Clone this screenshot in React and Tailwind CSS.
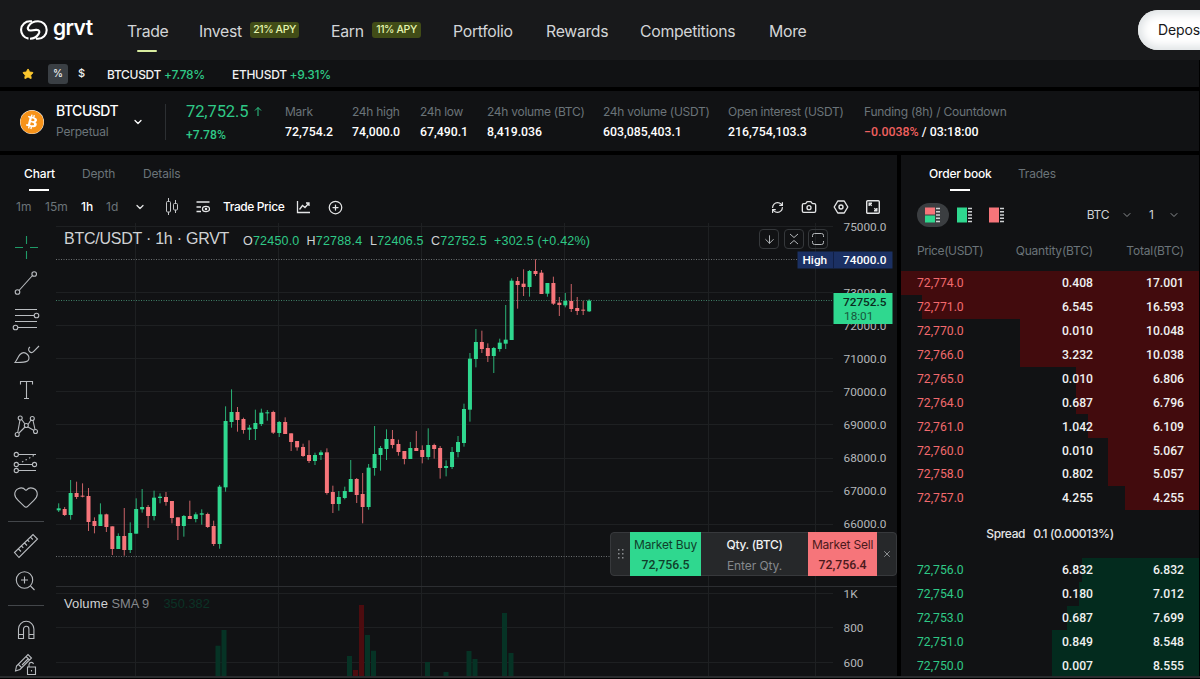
import { ArrowDown, Camera, ChevronDown, CirclePlus, Heart, RefreshCw, Star, X } from 'lucide-react';
import { FaBitcoin } from 'react-icons/fa';

const NAV = [
  { label: 'Trade', width: 'w-10', active: true },
  { label: 'Invest', width: 'w-[43px]', badge: '21% APY' },
  { label: 'Earn', width: 'w-[33px]', badge: '11% APY' },
  { label: 'Portfolio', width: 'w-[61px]' },
  { label: 'Rewards', width: 'w-[62px]' },
  { label: 'Competitions', width: 'w-[97px]' },
  { label: 'More', width: 'w-[37px]' },
];

const STATS = [
  { label: 'Mark', value: '72,754.2', width: 'w-[67px]' },
  { label: '24h high', value: '74,000.0', width: 'w-[68px]' },
  { label: '24h low', value: '67,490.1', width: 'w-[67px]' },
  { label: '24h volume (BTC)', value: '8,419.036', width: 'w-[116px]' },
  { label: '24h volume (USDT)', value: '603,085,403.1', width: 'w-[125px]' },
  { label: 'Open interest (USDT)', value: '216,754,103.3', width: 'w-[136px]' },
];

const ASKS = [
  ['72,774.0', '0.408', '17.001', 298],
  ['72,771.0', '6.545', '16.593', 277],
  ['72,770.0', '0.010', '10.048', 179],
  ['72,766.0', '3.232', '10.038', 179],
  ['72,765.0', '0.010', '6.806', 123],
  ['72,764.0', '0.687', '6.796', 123],
  ['72,761.0', '1.042', '6.109', 111],
  ['72,760.0', '0.010', '5.067', 91],
  ['72,758.0', '0.802', '5.057', 91],
  ['72,757.0', '4.255', '4.255', 74],
];

const BIDS = [
  ['72,756.0', '6.832', '6.832', 117],
  ['72,754.0', '0.180', '7.012', 120],
  ['72,753.0', '0.687', '7.699', 132],
  ['72,751.0', '0.849', '8.548', 147],
  ['72,750.0', '0.007', '8.555', 147],
];

const GREEN = '#2fd88f';
const RED = '#f6757a';

// up/down, high, body top, body bottom, low, in thirds of a pixel below `top`
const CANDLES = [
  {
    top: 157,
    bars: [
      [1, 370, 385, 391, 396], [0, 381, 387, 405, 408], [1, 300, 339, 405, 419], [0, 305, 339, 351, 357],
      [0, 310, 347, 350, 352], [0, 324, 348, 426, 453], [0, 412, 423, 438, 460], [1, 370, 403, 438, 438],
      [0, 401, 403, 441, 456], [0, 439, 439, 507, 525], [1, 460, 468, 507, 507], [0, 384, 468, 510, 527],
      [1, 427, 459, 510, 519], [1, 355, 387, 461, 461], [1, 327, 381, 388, 398], [0, 375, 381, 408, 444],
      [1, 332, 353, 408, 421], [1, 340, 350, 354, 370], [0, 336, 351, 366, 377], [0, 363, 363, 414, 430],
      [0, 412, 412, 438, 480], [1, 405, 408, 438, 470], [0, 362, 408, 417, 417], [1, 397, 403, 417, 427],
      [1, 388, 400, 404, 434], [0, 398, 402, 441, 444], [0, 422, 438, 492, 498], [1, 315, 320, 492, 506],
      [1, 79, 123, 322, 335], [1, 28, 96, 126, 143], [0, 81, 96, 120, 155], [0, 113, 117, 150, 161],
      [1, 135, 143, 149, 180], [1, 89, 129, 147, 180], [1, 86, 98, 132, 138], [1, 90, 97, 100, 122],
      [0, 92, 96, 158, 162], [1, 123, 126, 159, 171], [0, 112, 126, 162, 162], [0, 160, 160, 186, 213],
      [0, 183, 183, 202, 212], [0, 191, 201, 228, 231], [0, 181, 225, 243, 249], [1, 218, 225, 243, 255],
      [1, 211, 217, 225, 240], [0, 205, 217, 339, 344],
    ],
  },
  {
    top: 177,
    bars: [
      [0, 257, 276, 312, 339], [1, 273, 291, 312, 332], [1, 260, 273, 294, 298], [1, 180, 237, 276, 276],
      [0, 234, 237, 285, 309], [0, 219, 282, 321, 370], [1, 192, 203, 321, 329], [1, 78, 162, 204, 227],
      [1, 138, 144, 165, 212], [1, 88, 117, 147, 180], [0, 90, 117, 135, 145], [0, 119, 132, 156, 167],
      [0, 153, 153, 177, 193], [1, 126, 144, 177, 177], [0, 93, 144, 153, 153], [0, 136, 150, 171, 190],
      [1, 85, 135, 171, 179], [0, 131, 135, 147, 176], [0, 138, 144, 204, 236], [1, 181, 198, 204, 229],
      [1, 141, 156, 201, 207], [1, 108, 126, 156, 172],
    ],
  },
  {
    top: 27,
    bars: [
      [1, 461, 477, 579, 590], [1, 309, 326, 479, 515], [1, 237, 276, 327, 352], [0, 242, 276, 297, 309],
      [0, 280, 294, 318, 336], [1, 291, 294, 318, 369], [1, 266, 278, 297, 305], [1, 165, 269, 281, 297],
      [1, 85, 92, 270, 270], [0, 81, 93, 105, 176], [0, 58, 101, 111, 138], [1, 60, 63, 111, 140],
      [0, 28, 63, 72, 78], [0, 60, 68, 132, 132], [1, 99, 99, 131, 140], [0, 80, 99, 161, 165],
      [0, 141, 158, 165, 198], [1, 129, 153, 166, 172], [0, 102, 153, 177, 186], [0, 141, 174, 183, 195],
      [0, 152, 179, 182, 195], [1, 148, 152, 184, 186],
    ],
  },
].flatMap(({ top, bars }) => bars.map(([up, ...ys]) => [up, ...ys.map((y) => top + y / 3)]));

// x, top, is up
const VOLUMES = [
  [161, 422.7, 1], [167, 407, 1], [292.5, 433, 1], [298.5, 447, 0], [304.5, 382, 0], [310.5, 412, 1],
  [316.5, 427.7, 1], [370.5, 439, 1], [389, 449, 1], [412, 428, 1], [418, 436, 1], [447.5, 390, 1], [454, 430, 1],
];

const PRICE_LABELS = [
  ['75000.0', 3.5], ['73000.0', 70], ['72000.0', 102.5], ['71000.0', 135.5], ['70000.0', 168.5], ['69000.0', 202],
  ['68000.0', 235], ['67000.0', 268], ['66000.0', 301], ['1K', 370.5], ['800', 405], ['600', 440],
];

function Logo() {
  return (
    <div className="flex items-center gap-[5px] w-[107px] shrink-0 text-white">
      <svg width="28" height="20" viewBox="0 0 28 20" fill="none" stroke="currentColor" strokeWidth="2.1">
        <path d="M12 1.300H10a8.700 8.700 0 0 0-1.500 17.300" />
        <path d="M16 18.700h2a8.700 8.700 0 0 0 0-17.400c-4.500 0-7.500 2-9.300 4.600C7 8.500 8 10.800 11 10.500l5-.6c3.500-.3 4.200 1.700 2.500 4.200-1.600 2.600-4.500 4.600-8.500 4.600" />
      </svg>
      <span className="font-['Inter'] font-semibold text-[21px] leading-[24px] tracking-[-0.600px] -translate-y-[2px]">grvt</span>
    </div>
  );
}

function Header() {
  return (
    <header className="flex h-[60px] shrink-0 items-center bg-[#18191b] pl-5 overflow-hidden">
      <Logo />
      <nav className="flex shrink-0 items-center gap-8">
        {NAV.map((n) => (
          <div key={n.label} className="flex items-center gap-2 h-[60px]">
            <div className={`${n.width} relative whitespace-nowrap text-[15.800px] leading-6 tracking-[-0.300px] text-[#d3d5d7] pt-[3px]`}>
              {n.label}
              {n.active && <span className="absolute left-[10px] top-[33px] h-[2px] w-5 rounded bg-[#d9eda0]" />}
            </div>
            {n.badge && (
              <span className="flex h-4 w-[49px] items-center justify-center rounded-[3px] bg-[#414c17] text-[10.500px] font-medium tracking-[-0.400px] text-[#e6f5b0] whitespace-nowrap">
                {n.badge}
              </span>
            )}
          </div>
        ))}
      </nav>
      <button
        type="button"
        className="ml-[332px] h-10 w-[120px] shrink-0 rounded-full bg-white pl-5 text-left text-sm tracking-[-0.150px] text-[#17181a] shadow-[inset_0_0_8px_4px_#dfe3e5]"
      >
        Deposit
      </button>
    </header>
  );
}

function Favorites() {
  return (
    <div className="flex h-[27px] shrink-0 items-center bg-[#111214] pl-[22px] text-xs font-medium text-[#f0f1f1] mr-px">
      <Star size={12} className="fill-[#fbc72e] text-[#fbc72e]" />
      <span className="ml-[14px] flex size-5 items-center justify-center rounded-[3px] bg-[#3a3f44] text-[10px]">%</span>
      <span className="ml-[10px] w-[29px] text-[11px]">$</span>
      <span className="w-[125px] tracking-[-0.3px] pt-[2px]">BTCUSDT <span className="text-[#2fc987]">+7.78%</span></span>
      <span className="tracking-[-0.3px] pt-[2px]">ETHUSDT <span className="text-[#2fc987]">+9.31%</span></span>
    </div>
  );
}

function MarketInfo() {
  return (
    <section className="flex h-[60px] shrink-0 items-center bg-[#111214] pl-5 pt-px mr-px text-xs whitespace-nowrap">
      <FaBitcoin size={24} className="text-[#f7931a] bg-white rounded-full" />
      <div className="ml-3 w-[76px]">
        <div className="text-sm font-medium leading-5 tracking-[-0.500px] text-white">BTCUSDT</div>
        <div className="pt-px leading-5 text-[#6b7479] tracking-[-0.200px]">Perpetual</div>
      </div>
      <ChevronDown size={12} strokeWidth={2.500} className="text-white" />
      <div className="ml-[21px] h-9 w-px bg-[#2c2f32]" />
      <div className="ml-5 w-[99px] pt-1 text-[#2fc987]">
        <div className="flex items-center gap-[5px] font-['Roboto'] text-[16.500px] leading-[23px] tracking-[-0.100px]">
          72,752.5 <svg width="10" height="11" viewBox="0 0 10 11" fill="none" stroke="currentColor"><path d="M5 10V1.500M2 4.500l3-3 3 3" /></svg>
        </div>
        <div className="font-['Roboto'] text-[12.200px] font-medium leading-6">+7.78%</div>
      </div>
      {STATS.map((s) => (
        <div key={s.label} className={s.width}>
          <div className="leading-5 tracking-[-0.280px] text-[#6b7479]">{s.label}</div>
          <div className="font-['Roboto'] text-[12.300px] font-medium leading-5 text-white">{s.value}</div>
        </div>
      ))}
      <div>
        <div className="leading-5 tracking-[-0.250px] text-[#6b7479]">Funding (8h) / Countdown</div>
        <div className="font-['Roboto'] text-[12.400px] font-medium leading-5 text-white"><span className="text-[#f0605f]">−0.0038%</span> / 03:18:00</div>
      </div>
    </section>
  );
}

function Toolbar() {
  return (
    <div className="flex h-8 shrink-0 items-center pl-4 text-xs text-[#6b7479] whitespace-nowrap">
      <span className="w-[29px]">1m</span>
      <span className="w-9">15m</span>
      <span className="w-[25px] font-medium text-white">1h</span>
      <span className="w-7">1d</span>
      <ChevronDown size={12} strokeWidth={2.500} className="text-[#e4e5e6]" />
      <svg className="ml-[19px]" width="14" height="18" viewBox="0 0 14 18" fill="none" stroke="#c5c7c9">
        <path d="M3.500 0v3M3.500 14v3M10.500 2v3M10.500 12v3" />
        <rect x="1.500" y="3.500" width="4" height="10.500" rx="1" />
        <rect x="8.500" y="5.500" width="4" height="6.500" rx="1" />
      </svg>
      <svg className="ml-[17px]" width="14" height="12" viewBox="0 0 14 12" fill="none" stroke="#e4e5e6" strokeWidth="1.300">
        <path d="M.500 1H13.500M.500 6H5M.500 10.500H5" />
        <ellipse cx="10" cy="8" rx="3.500" ry="2.600" />
        <circle cx="10" cy="8" r=".6" />
      </svg>
      <span className="ml-[13px] w-[73px] font-medium tracking-[-0.400px] text-white">Trade Price</span>
      <svg width="14" height="14" viewBox="0 0 14 14" fill="none" stroke="#e4e5e6" strokeWidth="1.300">
        <path d="M1.500 1v11.500H14M3.500 9.500l3-4 2.500 2 3.800-4.300M10 3h3v3" />
      </svg>
      <CirclePlus size={15} strokeWidth={2} className="ml-[18px] text-[#e4e5e6]" />
      <div className="ml-auto mr-4 flex items-center gap-4 text-[#e4e5e6]">
        <RefreshCw size={13} strokeWidth={2.200} className="mr-px" />
        <Camera size={16} strokeWidth={2} />
        <svg width="16" height="16" viewBox="0 0 16 16" fill="none" stroke="currentColor" strokeWidth="1.400">
          <path d="M4.800 2h6.400L14.800 8l-3.600 6H4.800L1.200 8z" strokeLinejoin="round" />
          <circle cx="8" cy="8" r="2" />
        </svg>
        <svg width="16" height="16" viewBox="0 0 16 16" fill="none" stroke="currentColor" strokeWidth="1.400">
          <rect x="1.700" y="1.700" width="12.600" height="12.600" rx="1" />
          <path d="M4.200 7V4.200H7M4.200 4.200l2.500 2.500M9 11.800h2.800V9M11.800 11.800L9.300 9.300" />
        </svg>
      </div>
    </div>
  );
}

function DrawingTools() {
  return (
    <svg className="shrink-0" width="56" height="455" viewBox="0 0 56 455" fill="none" stroke="#b9bcc0" strokeWidth="1.100">
      {/* crosshair */}
      <path d="M15 24.500h8M30 24.500h8M26.500 13v8M26.500 28v8" stroke="#1f9a68" />
      {/* trend line */}
      <path d="M19 67.500L32.500 52.500" />
      <circle cx="17.500" cy="69" r="2.300" /><circle cx="34.200" cy="51" r="2.300" />
      {/* fib levels */}
      <path d="M15 86.500h22M15 92.500h19M15 98.500h22M18 104.500h19" />
      <circle cx="36.500" cy="92.500" r="2.300" /><circle cx="15.500" cy="104.500" r="2.300" />
      {/* brush */}
      <path d="M15 139.500c2-2.500 3-6 5-8 2.500-2.500 5.500-2 7.500 0s2 5 0 6.500c-2.500 1.700-8 1.500-12.500 1.500zM30 124c-1.500 1-2 3-.5 4.500s3 1.200 4 .2l5.500-5.700" />
      {/* text */}
      <path d="M20.500 161.500v-3h12v3M26.500 158.500v17M24 175.500h5" />
      {/* pattern */}
      <g transform="translate(0 14.500)">
        <path d="M17.700 195l2.300-12.500M22 182.500l3 4M28 187l3-4.500M33 183l2 9M19 195.500l6-6M28 189.500l6 3.500" />
        <circle cx="20.200" cy="180.500" r="2" /><circle cx="32.300" cy="181" r="2" /><circle cx="26.300" cy="188" r="2" />
        <circle cx="17.200" cy="197" r="2" /><circle cx="35.500" cy="194" r="2" />
      </g>
      {/* forecast */}
      <path d="M18.500 231.500H36M18.500 241.500H32M18.500 247.500H36" />
      <path d="M22 239l13-7" strokeDasharray="1.500 2.500" />
      <circle cx="16.300" cy="231.500" r="2.100" /><circle cx="16.300" cy="241.500" r="2.100" /><circle cx="16.300" cy="247.500" r="2.100" /><circle cx="34.500" cy="241.500" r="2.100" />
      <Heart x="12.500" y="260.500" width="27" height="27" strokeWidth={1} className="text-[#b9bcc0]" />
      <path d="M8 298.500h36M8 382.500h36" stroke="#43464a" />
      <g transform="translate(0 -1)">
        {/* ruler */}
        <path d="M14.500 330.500L33 312.500l4.500 4.500L19 335.500zM18.500 327l2.500 2.500M21.500 324l1.800 1.800M24.500 321l2.500 2.500M27.500 318l1.800 1.800M30.500 315.200l2.300 2.300" />
        {/* zoom */}
        <circle cx="24.500" cy="358" r="8.200" />
        <path d="M30.500 364l4 4M21 358h7M24.500 354.500v7" />
        {/* magnet */}
        <path d="M18.500 416.500V407a7.700 7.700 0 0 1 15.400 0v9.500h-5V407a2.700 2.700 0 0 0-5.400 0v9.500zM18.500 412.500h5M29 412.500h5" />
        {/* pencil with lock */}
        <path d="M15.500 449l1-5L28 432.500l3.500 3.500L20 447.500l-4.500 1.500zM18.500 442.500l3.500 3.500M26 434.500l3.500 3.500M22 443l6.500-6.500" />
        <path d="M27.500 445h8v7.500h-8zM29 445v-2.500a2.300 2.300 0 0 1 4.500-.5M31.500 448v1.500" />
      </g>
    </svg>
  );
}

function PriceChart() {
  return (
    <svg className="shrink-0" width="841" height="455" viewBox="0 0 841 455">
      <g stroke="#1e2022">
        {[3.5, 69.5, 102.5, 135.5, 168.5, 201.5, 235.5, 268.5, 301.5, 370.5, 404.5, 439.5].map((y) => (
          <path key={y} d={`M0 ${y}H777`} />
        ))}
        {[79.5, 222.5, 365.5, 508.5, 652.5, 759.5].map((x) => (
          <path key={x} d={`M${x} 0V455`} />
        ))}
        <path d="M0 363.500H841" stroke="#2c2e31" />
      </g>
      <path d="M0 36.500H741M0 333.500H554" stroke="#6b6e70" strokeDasharray="1 1.500" />
      <path d="M0 77.500H777" stroke="#3f7f66" strokeDasharray="1 1.500" />
      {VOLUMES.map(([x, y, up]) => (
        <rect key={x} x={x - 1.500} y={y} width="5" height={455 - y} fill={up ? '#063325' : '#4d0c0f'} />
      ))}
      {CANDLES.map(([up, high, top, bottom, low], i) => {
        const x = 2.700 + i * 5.960;
        return (
          <g key={i} fill={up ? GREEN : RED}>
            <rect x={x - 0.500} y={high} width="1" height={low - high} opacity=".8" />
            <rect x={x - 2} y={top} width="4" height={bottom - top} />
          </g>
        );
      })}
      <g fontFamily="Roboto" fontSize="11.800" fill="#b4b7ba">
        {PRICE_LABELS.map(([label, y]) => (
          <text key={label} x="787.500" y={y + 4.200}>{label}</text>
        ))}
      </g>
      <rect x="741.500" y="28.500" width="95" height="17" fill="#1b3063" />
      <path d="M777.500 28.500v17" stroke="#111f45" />
      <g fontFamily="Roboto" fontSize="11.800" fontWeight="500">
        <text x="746.500" y="41" fill="#fff">High</text>
        <text x="787" y="41" fill="#fff">74000.0</text>
        <rect x="777.500" y="70" width="59" height="31" fill={GREEN} />
        <text x="787" y="82.500" fill="#0b2c1e">72752.5</text>
        <text x="788" y="96.500" fill="#17583c" fontWeight="400">18:01</text>
      </g>
      <g fontFamily="Liberation Sans" fill="#d0d2d4">
        <text x="8" y="21" fontSize="16" letterSpacing="-.25">BTC/USDT · 1h · GRVT</text>
        <text y="22" fontSize="12.500" letterSpacing=".2">
          <tspan x="187">O</tspan><tspan fill="#2fc987">72450.0</tspan>
          <tspan x="250.500">H</tspan><tspan fill="#2fc987">72788.4</tspan>
          <tspan x="314">L</tspan><tspan fill="#2fc987">72406.5</tspan>
          <tspan x="375">C</tspan><tspan fill="#2fc987">72752.5</tspan>
          <tspan x="438" fill="#2fc987">+302.5 (+0.42%)</tspan>
        </text>
        <text x="8" y="384.500" fontSize="13" letterSpacing=".1">Volume</text>
        <text x="55.500" y="384.500" fontSize="12.800" fill="#85888c">SMA 9</text>
        <text x="107.500" y="384.500" fontSize="12.800" fill="#0b3326">350.382</text>
      </g>
    </svg>
  );
}

function PaneButtons() {
  const box = 'flex size-5 items-center justify-center rounded border border-[#35383b]';
  return (
    <div className="absolute left-[759px] top-[6px] flex gap-[4.500px] text-[#b4b7ba]">
      <span className={box}><ArrowDown size={13} strokeWidth={1.800} /></span>
      <span className={box}>
        <svg width="12" height="14" viewBox="0 0 12 14" fill="none" stroke="currentColor"><path d="M2 2l4 3.500L10 2M2 12l4-3.500 4 3.500" /></svg>
      </span>
      <span className={box}>
        <svg width="12" height="12" viewBox="0 0 12 12" fill="none" stroke="currentColor"><path d="M.500 4V2.500a2 2 0 0 1 2-2h7a2 2 0 0 1 2 2V4M.500 8v1.500a2 2 0 0 0 2 2h7a2 2 0 0 0 2-2V8" /></svg>
      </span>
    </div>
  );
}

function QuickTrade() {
  return (
    <div className="absolute left-[610px] top-[309px] flex h-[44px] w-[287px] items-stretch rounded border border-[#37393c] bg-[#26282a] text-xs text-center whitespace-nowrap">
      <div className="flex w-[19px] items-center justify-center">
        <svg width="6" height="10" viewBox="0 0 6 10" fill="#8b8e91">
          {[0, 4, 8].map((y) => <path key={y} d={`M0 ${y}h1.500v1.500H0zM4 ${y}h1.500v1.500H4z`} />)}
        </svg>
      </div>
      <div className="w-[71px] bg-[#2fd88f] pt-[3px] leading-5 text-[#0f3f2b] -my-px tracking-[-0.150px]">
        Market Buy<div className="font-['Roboto'] text-[12.300px] font-medium tracking-normal">72,756.5</div>
      </div>
      <div className="w-[107px] pt-px leading-[21px]">
        <div className="font-medium text-[#f0f1f1] tracking-[-0.3px]">Qty. (BTC)</div>
        <div className="text-[#85898d] tracking-[-0.1px]">Enter Qty.</div>
      </div>
      <div className="w-[69px] bg-[#f6757a] pt-[3px] leading-5 text-[#4b1a1c] -my-px tracking-[-0.2px]">
        Market Sell<div className="font-['Roboto'] text-[12.300px] font-medium tracking-normal">72,756.4</div>
      </div>
      <div className="flex flex-1 items-center justify-center text-[#a0a3a6]"><X size={10} /></div>
    </div>
  );
}

function ChartPanel() {
  return (
    <section className="flex w-[897px] shrink-0 flex-col bg-[#111214]">
      <div className="flex h-9 shrink-0 pl-6 pt-[10.500px] text-xs leading-4 tracking-[-0.150px] text-[#6b7479]">
        <div className="relative w-[58px] font-medium text-white">Chart<span className="absolute left-[5px] top-[23.500px] h-[2px] w-5 bg-white" /></div>
        <div className="w-[61px]">Depth</div>
        <div>Details</div>
      </div>
      <Toolbar />
      <div className="relative flex min-h-0 flex-1">
        <DrawingTools />
        <PriceChart />
        <PaneButtons />
        <QuickTrade />
      </div>
    </section>
  );
}

function BookIcon({ top, bottom, active }) {
  return (
    <span className={`flex h-6 w-8 items-center justify-center rounded-full ${active ? 'bg-[#3b3e41]' : ''}`}>
      <svg width="16" height="16" viewBox="0 0 16 16">
        <path d="M0 .500h10v7H0z" fill={top} />
        <path d="M0 8.500h10v7H0z" fill={bottom} />
        {!active && <path d="M0 7h10v2H0z" fill={top} />}
        <path d="M11 1.500h4M11 4.800h4M11 8h4M11 11.200h4M11 14.500h4" stroke="#d0d2d4" strokeWidth="1.500" />
      </svg>
    </span>
  );
}

function BookRow({ row, side }) {
  const [price, qty, total, depth] = row;
  return (
    <div className="relative flex h-[23.900px] items-center pl-4 pr-[15px] pt-px font-['Roboto'] text-[12.200px] font-medium text-[#f0f1f1]">
      <div className={`absolute inset-y-0 right-0 ${side === 'ask' ? 'bg-[#420b0d]' : 'bg-[#032b1e]'}`} style={{ width: depth }} />
      <span className={`relative w-[86px] font-normal ${side === 'ask' ? 'text-[#f26a6e]' : 'text-[#2fc987]'}`}>{price}</span>
      <span className="relative w-[90px] text-right">{qty}</span>
      <span className="relative flex-1 text-right">{total}</span>
    </div>
  );
}

function OrderBook() {
  return (
    <section className="w-[298px] shrink-0 bg-[#111214] text-xs whitespace-nowrap">
      <div className="flex h-9 pl-7 pt-[10.500px] leading-4 tracking-[-0.200px] text-[#6b7479]">
        <div className="relative w-[89px] font-medium text-white">Order book<span className="absolute left-[21px] top-[23.500px] h-[2px] w-5 bg-white" /></div>
        <div>Trades</div>
      </div>
      <div className="flex h-12 items-center pl-4 pr-[19px] text-[#d0d2d4]">
        <BookIcon top={RED} bottom={GREEN} active />
        <BookIcon top={GREEN} bottom={GREEN} />
        <BookIcon top={RED} bottom={RED} />
        <span className="ml-auto tracking-[-0.300px]">BTC</span>
        <ChevronDown size={12} className="ml-3 text-[#8b8e91]" />
        <span className="ml-4">1</span>
        <ChevronDown size={12} className="ml-[14px] text-[#8b8e91]" />
      </div>
      <div className="flex h-8 items-start pt-1 pl-4 pr-[15px] tracking-[-0.200px] text-[#6b7479]">
        <span className="w-[70px] tracking-[-0.400px]">Price(USDT)</span>
        <span className="w-[106px] text-right">Quantity(BTC)</span>
        <span className="flex-1 text-right">Total(BTC)</span>
      </div>
      {ASKS.map((r) => <BookRow key={r[0]} row={r} side="ask" />)}
      <div className="flex h-12 items-center justify-center gap-2 pt-px font-medium tracking-[-0.350px] text-[#e4e5e6]">
        <span>Spread</span><span>0.1 (0.00013%)</span>
      </div>
      {BIDS.map((r) => <BookRow key={r[0]} row={r} side="bid" />)}
    </section>
  );
}

export default function App() {
  return (
    <div className="flex h-[679px] w-[1200px] flex-col overflow-hidden bg-black font-['Inter',sans-serif]">
      <Header />
      <Favorites />
      <div className="mt-1"><MarketInfo /></div>
      <main className="mt-1 flex h-[523px] gap-1 overflow-hidden border-b-2 border-[#2a2c2e]">
        <ChartPanel />
        <OrderBook />
      </main>
    </div>
  );
}
